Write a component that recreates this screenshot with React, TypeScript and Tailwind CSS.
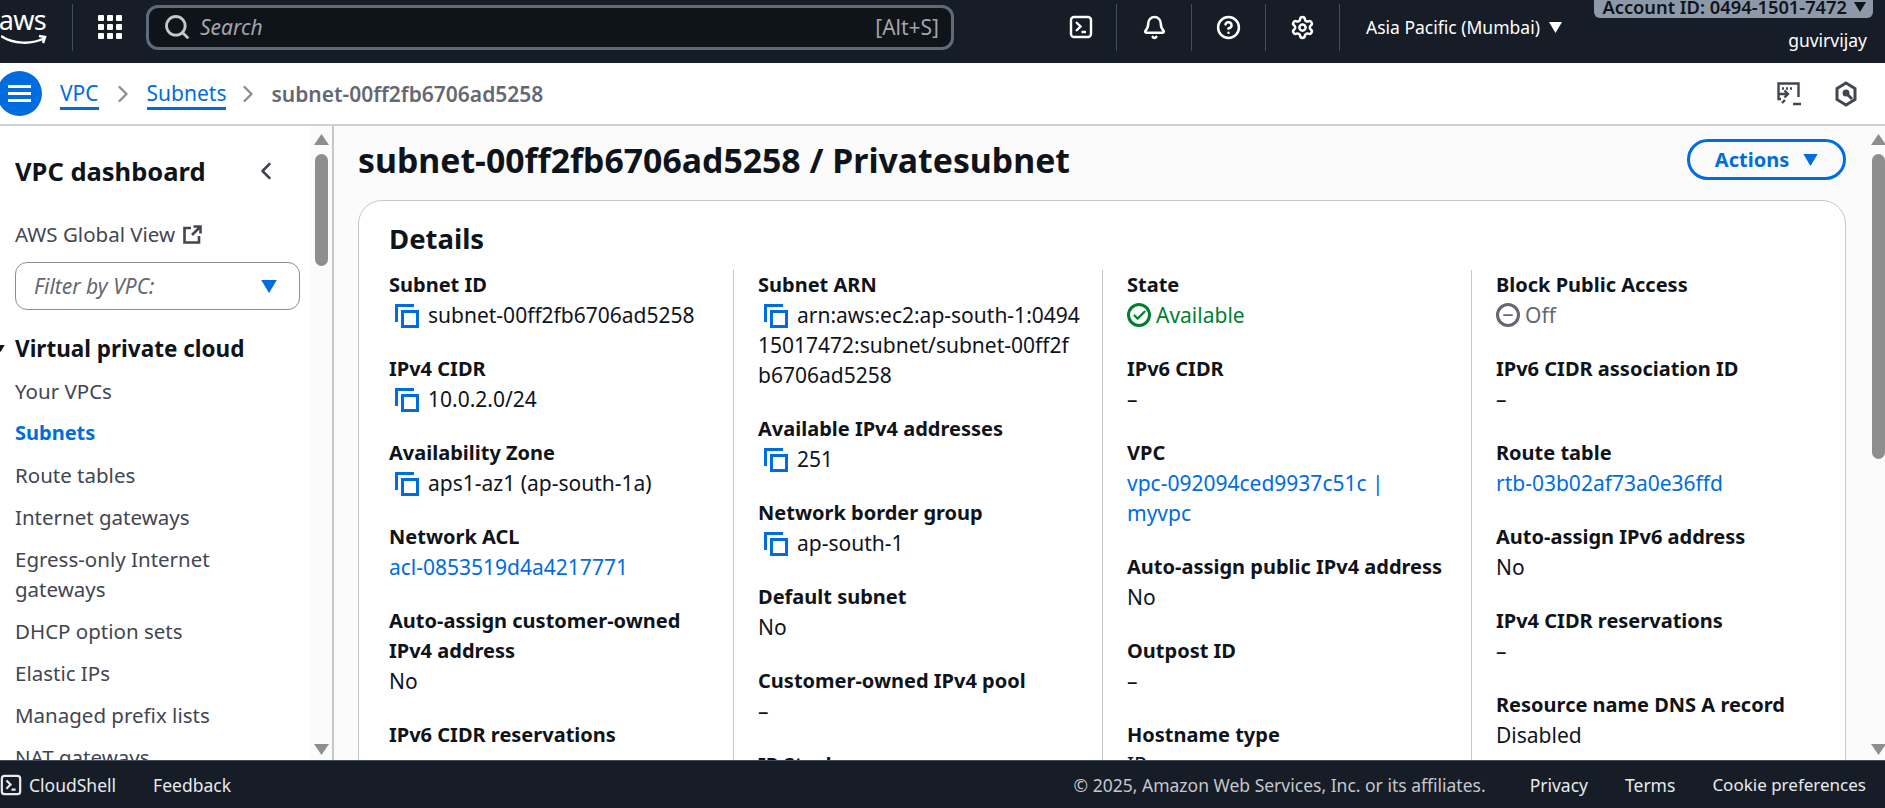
import React from 'react';
import { Search, Bell, CircleHelp, Settings, ChevronRight, ChevronLeft, Check, Minus } from 'lucide-react';

type Row = {
  label: string;
  value?: string;
  copy?: boolean;
  link?: boolean;
  status?: 'ok' | 'off';
};

const COLUMNS: Row[][] = [
  [
    { label: 'Subnet ID', value: 'subnet-00ff2fb6706ad5258', copy: true },
    { label: 'IPv4 CIDR', value: '10.0.2.0/24', copy: true },
    { label: 'Availability Zone', value: 'aps1-az1 (ap-south-1a)', copy: true },
    { label: 'Network ACL', value: 'acl-0853519d4a4217771', link: true },
    { label: 'Auto-assign customer-owned IPv4 address', value: 'No' },
    { label: 'IPv6 CIDR reservations', value: '–' },
  ],
  [
    { label: 'Subnet ARN', value: 'arn:aws:ec2:ap-south-1:0494\n15017472:subnet/subnet-00ff2f\nb6706ad5258', copy: true },
    { label: 'Available IPv4 addresses', value: '251', copy: true },
    { label: 'Network border group', value: 'ap-south-1', copy: true },
    { label: 'Default subnet', value: 'No' },
    { label: 'Customer-owned IPv4 pool', value: '–' },
    { label: 'IP Stack', value: 'IPv4' },
  ],
  [
    { label: 'State', value: 'Available', status: 'ok' },
    { label: 'IPv6 CIDR', value: '–' },
    { label: 'VPC', value: 'vpc-092094ced9937c51c | myvpc', link: true },
    { label: 'Auto-assign public IPv4 address', value: 'No' },
    { label: 'Outpost ID', value: '–' },
    { label: 'Hostname type', value: 'IP name' },
  ],
  [
    { label: 'Block Public Access', value: 'Off', status: 'off' },
    { label: 'IPv6 CIDR association ID', value: '–' },
    { label: 'Route table', value: 'rtb-03b02af73a0e36ffd', link: true },
    { label: 'Auto-assign IPv6 address', value: 'No' },
    { label: 'IPv4 CIDR reservations', value: '–' },
    { label: 'Resource name DNS A record', value: 'Disabled' },
  ],
];

const NAV = ['Your VPCs', 'Subnets', 'Route tables', 'Internet gateways', 'Egress-only Internet gateways', 'DHCP option sets', 'Elastic IPs', 'Managed prefix lists', 'NAT gateways', 'Peering connections'];

const CopyIcon = () => (
  <svg width="24" height="24" viewBox="0 0 24 24" fill="none" stroke="#006ce0" strokeWidth="3" className="shrink-0">
    <path d="M1.5 18V1.5H19" />
    <rect x="7.5" y="7.5" width="15" height="15" />
  </svg>
);

const ShellIcon = ({ size }: { size: number }) => (
  <svg width={size} height={size} viewBox="0 0 24 24" fill="none" stroke="currentColor" strokeWidth="2.4" className="shrink-0">
    <rect x="2" y="2" width="20" height="20" rx="3" />
    <path d="M7 7l4.5 4.5L7 16M12.5 17H17" />
  </svg>
);

const Caret = ({ className }: { className: string }) => (
  <svg viewBox="0 0 12 10" className={className} fill="currentColor">
    <path d="M0 0h12L6 10z" />
  </svg>
);

const Divider = () => <div className="w-px h-[47px] shrink-0 bg-[#414d5c]" />;

// fake native scrollbar column
const Scrollbar = ({ thumb, className }: { thumb: number; className: string }) => (
  <div className={`flex flex-col items-center pt-[8px] pb-[5px] ${className}`}>
    <svg width="15" height="11" viewBox="0 0 15 11" fill="#8e8e8e"><path d="M7.5 0L15 11H0z" /></svg>
    <div className="w-[13px] rounded-full bg-[#8e8e8e] mt-[9px]" style={{ height: thumb }} />
    <div className="flex-1" />
    <svg width="15" height="11" viewBox="0 0 15 11" fill="#8e8e8e"><path d="M0 0h15L7.5 11z" /></svg>
  </div>
);

function Field({ row }: { row: Row }) {
  return (
    <div className="mb-[24px]">
      <div className="font-bold text-[20px] text-[#0f141a]">{row.label}</div>
      {row.status === 'ok' && (
        <div className="flex items-center gap-[5px] text-[#00802f]">
          <span className="w-[24px] h-[24px] rounded-full border-[3px] border-[#00802f] flex items-center justify-center">
            <Check size={15} strokeWidth={3.5} />
          </span>
          {row.value}
        </div>
      )}
      {row.status === 'off' && (
        <div className="flex items-center gap-[5px] text-[#656871]">
          <span className="w-[24px] h-[24px] rounded-full border-[3px] border-[#656871] flex items-center justify-center">
            <Minus size={14} strokeWidth={3} />
          </span>
          {row.value}
        </div>
      )}
      {!row.status && row.copy && (
        <div className="text-[#0f141a] whitespace-pre">
          <span className="inline-block align-[-5px] ml-[6px] mr-[9px]"><CopyIcon /></span>
          {row.value}
        </div>
      )}
      {!row.status && !row.copy && (
        <div className={row.link ? 'text-[#006ce0]' : 'text-[#0f141a]'}>{row.value}</div>
      )}
    </div>
  );
}

export default function App() {
  return (
    <div className="h-screen flex flex-col overflow-hidden bg-white text-[21px] leading-[30px] [font-family:'Noto_Sans',sans-serif]">
      {/* Top bar */}
      <header className="h-[63px] shrink-0 bg-[#161d26] flex items-center pb-[9px] text-white">
        <div className="w-[72px] h-[48px] shrink-0 overflow-hidden flex flex-col items-end pr-[26px]">
          <span className="text-[27px] leading-[28px] tracking-tight mt-[3px]">aws</span>
          <svg width="47" height="12" viewBox="0 0 47 12" fill="none" stroke="white" strokeWidth="2.5" className="-mr-[2px]">
            <path d="M0 2c12 8 30 9 44 2M38 2l6 1-2 6" />
          </svg>
        </div>
        <Divider />
        <div className="w-[73px] shrink-0 flex justify-center">
          <div className="grid grid-cols-3 gap-[3px]">
            {Array.from({ length: 9 }).map((_, i) => (
              <span key={i} className="w-[6px] h-[6px] bg-white rounded-[1px]" />
            ))}
          </div>
        </div>
        <div className="w-[808px] h-[45px] shrink-0 flex items-center rounded-[12px] border-[3px] border-[#5f6b7a] bg-[#0f141a] pl-[14px] pr-[12px]">
          <Search size={28} strokeWidth={2.4} className="text-[#c6c6cd]" />
          <span className="ml-[9px] italic text-[#a4a4ad]">Search</span>
          <span className="ml-auto text-[#a4a4ad]">[Alt+S]</span>
        </div>
        <div className="w-[142px] shrink-0 flex justify-end pr-[3px]"><ShellIcon size={24} /></div>
        <div className="w-[21px] shrink-0 flex justify-end"><Divider /></div>
        <div className="w-[74px] shrink-0 flex justify-center"><Bell size={25} strokeWidth={2.4} /></div>
        <Divider />
        <div className="w-[73px] shrink-0 flex justify-center"><CircleHelp size={25} strokeWidth={2.4} /></div>
        <Divider />
        <div className="w-[73px] shrink-0 flex justify-center"><Settings size={25} strokeWidth={2.4} /></div>
        <Divider />
        <div className="w-[250px] shrink-0 pl-[26px] flex items-center gap-[9px] text-[17.500px]">
          Asia Pacific (Mumbai)
          <Caret className="w-[13px] h-[11px]" />
        </div>
        <div className="flex-1 self-start flex flex-col items-end">
          <div className="w-[279px] mr-[12px] h-[18px] shrink-0 bg-[#8d99a8] rounded-b-[6px] flex items-end justify-end pr-[7px] gap-[7px] text-[#0f141a] text-[18.300px] font-semibold leading-[22px] overflow-hidden">
            Account ID: 0494-1501-7472
            <Caret className="w-[12px] h-[10px] mb-[6px]" />
          </div>
          <div className="mt-[7px] pr-[18px] text-[17.500px]">guvirvijay</div>
        </div>
      </header>

      {/* Breadcrumbs */}
      <div className="h-[63px] shrink-0 border-b-2 border-[#d0d0d5] flex items-center bg-white">
        <div className="w-[45px] h-[45px] -ml-[3px] shrink-0 rounded-full bg-[#006ce0] flex flex-col items-center justify-center gap-[4px]">
          <span className="w-[23px] h-[3px] bg-white" />
          <span className="w-[23px] h-[3px] bg-white" />
          <span className="w-[23px] h-[3px] bg-white" />
        </div>
        <a className="ml-[18px] text-[#006ce0] border-b-[3px] border-[#006ce0] leading-[27px] mt-[3px]">VPC</a>
        <ChevronRight size={28} className="mx-[10px] text-[#8c8c94]" />
        <a className="text-[#006ce0] border-b-[3px] border-[#006ce0] leading-[27px] mt-[3px]">Subnets</a>
        <ChevronRight size={28} className="ml-[8px] mr-[9px] text-[#8c8c94]" />
        <span className="font-semibold text-[#656871]">subnet-00ff2fb6706ad5258</span>
        <div className="ml-auto flex items-center gap-[33px] pr-[27px] text-[#424650]">
          <svg width="24" height="24" viewBox="0 0 24 24" fill="none" stroke="currentColor" strokeWidth="2.4">
            <path d="M4 17H1.5V1.5h20V15" />
            <path d="M5 6.5h2M9 6.5h2M13 6.5h2" strokeWidth="2.5" />
            <path d="M2 12h9M7.5 8.5L11 12l-3.500 3.500M5 21l3-3M16 22h8" />
          </svg>
          <svg width="24" height="26" viewBox="0 0 24 26" fill="none" stroke="currentColor" strokeWidth="3">
            <path d="M12 2l9 5.500v11L12 24l-9-5.500v-11z" />
            <circle cx="12" cy="12" r="2" fill="currentColor" />
            <path d="M13 13l5 5" />
          </svg>
        </div>
      </div>

      <div className="flex-1 flex min-h-0">
        {/* Sidebar */}
        <aside className="w-[334px] shrink-0 flex border-r-2 border-[#c6c6cd] bg-[#fbfbfb]">
          <div className="w-[310px] shrink-0 bg-white overflow-hidden pl-[15px] pr-[10px] pt-[27px] text-[#424650] text-[20.500px]">
            <div className="flex items-center justify-between pr-[20px] text-[#0f141a]">
              <span className="text-[25.500px] leading-[36px] font-bold">VPC dashboard</span>
              <ChevronLeft size={28} strokeWidth={2.2} className="text-[#424650]" />
            </div>
            <div className="mt-[30px] flex items-center gap-[8px]">
              AWS Global View
              <svg width="19" height="19" viewBox="0 0 19 19" fill="none" stroke="currentColor" strokeWidth="2.6">
                <path d="M8 3H1.500v14.500H16V11M9 10l8.500-8.500M10.500 1.500h7v7" />
              </svg>
            </div>
            <div className="mt-[13px] h-[48px] w-[285px] rounded-[12px] border border-[#8c8c94] flex items-center justify-between pl-[18px] pr-[22px] italic text-[#656871] text-[21px]">
              Filter by VPC:
              <Caret className="w-[16px] h-[13px] text-[#006ce0]" />
            </div>
            <div className="mt-[24px] relative text-[#0f141a] text-[22.500px] leading-[30px] font-bold">
              <Caret className="absolute -left-[19px] top-[11px] w-[9px] h-[7px]" />
              Virtual private cloud
            </div>
            <nav className="mt-[12px] flex flex-col gap-[12px]">
              {NAV.map(n => (
                <a key={n} className={n === 'Subnets' ? 'font-bold text-[20px] text-[#006ce0]' : ''}>{n}</a>
              ))}
            </nav>
          </div>
          <Scrollbar thumb={112} className="w-[23px] pl-[4px] pr-[4px]" />
        </aside>

        {/* Main */}
        <main className="flex-1 flex min-w-0 bg-[#fbfbfb]">
          <div className="flex-1 min-w-0 overflow-hidden pl-[24px] pr-[23px]">
            <div className="h-[74px] flex items-start justify-between">
              <h1 className="text-[33.800px] leading-[40px] font-bold text-[#0f141a] mt-[14px]">subnet-00ff2fb6706ad5258 / Privatesubnet</h1>
              <button className="mt-[13px] w-[159px] h-[41px] rounded-full border-[3px] border-[#006ce0] flex items-center justify-center gap-[14px] font-bold text-[20px] text-[#006ce0]">
                Actions
                <Caret className="w-[15px] h-[12px]" />
              </button>
            </div>
            <section className="rounded-t-[24px] border border-[#c6c6cd] bg-white h-[700px] pl-[6px]">
              <h2 className="pl-[24px] pt-[18px] h-[69px] text-[27.500px] leading-[40px] font-bold text-[#0f141a]">Details</h2>
              <div className="grid grid-cols-[369px_369px_369px_369px]">
                {COLUMNS.map((col, i) => (
                  <div key={i} className={`pl-[24px] pr-[23px] h-[620px] ${i < 3 ? 'border-r border-[#c6c6cd]' : ''}`}>
                    {col.map(r => <Field key={r.label} row={r} />)}
                  </div>
                ))}
              </div>
            </section>
          </div>
          <Scrollbar thumb={305} className="w-[16px] pl-[2px]" />
        </main>
      </div>

      {/* Footer */}
      <footer className="h-[48px] shrink-0 bg-[#161d26] border-t border-[#414d5c] flex items-center text-[#e8eaed] text-[17.500px]">
        <ShellIcon size={22} />
        <span className="ml-[7px]">CloudShell</span>
        <span className="ml-[37px]">Feedback</span>
        <span className="ml-auto text-[#c6c6cd]">© 2025, Amazon Web Services, Inc. or its affiliates.</span>
        <span className="ml-[44px]">Privacy</span>
        <span className="ml-[37px]">Terms</span>
        <span className="ml-[37px] mr-[19px] text-[17px]">Cookie preferences</span>
      </footer>
    </div>
  );
}
